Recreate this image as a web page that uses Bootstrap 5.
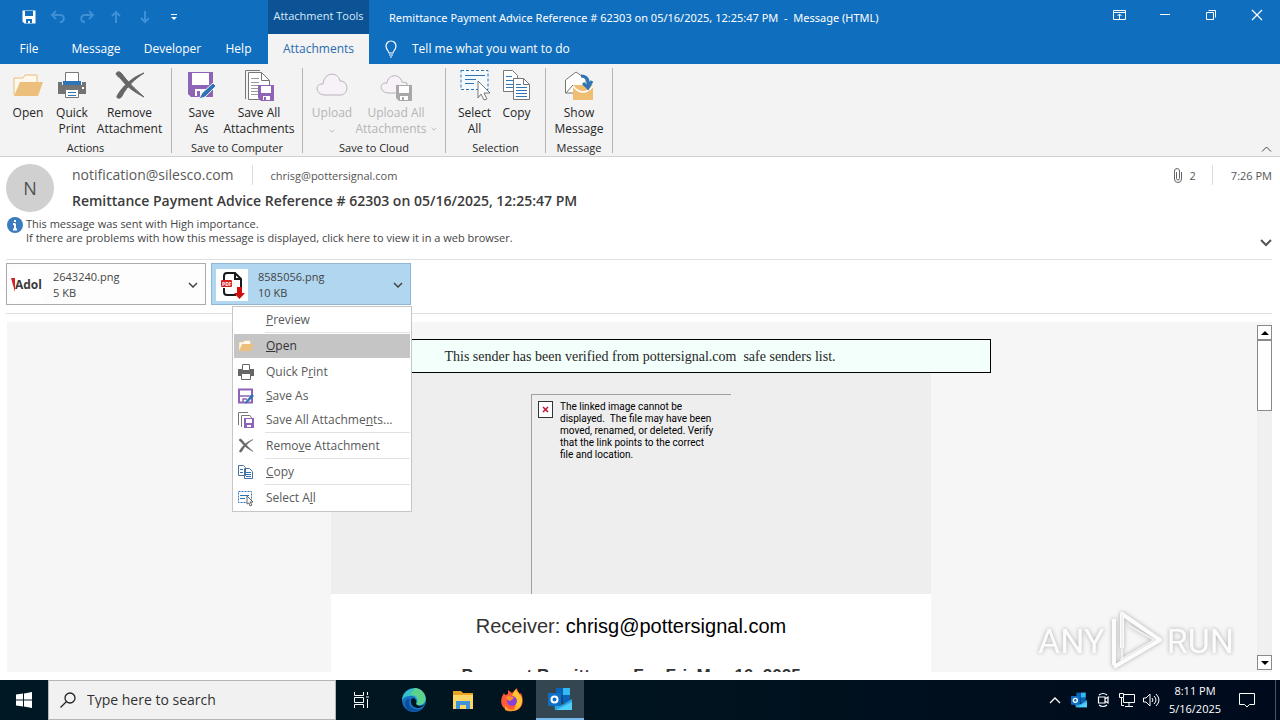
<!DOCTYPE html>
<html lang="en">
<head>
<meta charset="utf-8">
<meta name="viewport" content="width=device-width, initial-scale=1">
<title>Remittance Payment Advice - Message (HTML)</title>
<link href="https://cdn.jsdelivr.net/npm/bootstrap@5.3.0/dist/css/bootstrap.min.css" rel="stylesheet">
<style>
  :root { --blue: #106ebe; --ink: #262626; }
  body { font-family: "Open Sans", "Noto Sans", sans-serif; font-size: 12px; line-height: 16px; color: var(--ink); background: #fff; }
  button { color: inherit; background: none; border: 0; padding: 0; }
  svg { display: block; flex: none; fill: none; overflow: visible; }
  a { color: inherit; text-decoration: none; }
  h1, h2 { margin: 0; }

  /* title bar */
  .title-bar { background: var(--blue); color: #fff; height: 64px; }
  .title-row { height: 34px; }
  .tab-row { height: 30px; }
  .title-left { width: 268px; }
  .title-tools { width: 101px; }
  .tools-caption { background: #0b5394; color: #d7ebfa; font-size: 11px; height: 32px; }
  .tools-box { background: #0b5394; height: 34px; }
  .quick-bar { padding-left: 14px; }
  .quick-btn { width: 29px; height: 20px; }
  .tab-link { height: 30px; }
  .tab-file { width: 58px; } .tab-message { width: 76px; } .tab-developer { width: 77px; } .tab-help { width: 55px; }
  .tab-open { background: #f3f3f3; color: #2a6db0; }
  .caption-btn { width: 46px; height: 30px; }
  .window-title { font: 400 11px/16px "Noto Sans", sans-serif; white-space: pre; padding: 2px 0 0 20px; }
  .tell-me { background: none; border: 0; color: #fff; width: 200px; outline: 0; padding: 0; }
  .tell-me::placeholder { color: #fff; opacity: 1; }

  /* ribbon */
  .ribbon { background: #f3f3f3; border-bottom: 1px solid #d0d0d0; height: 93px; }
  .ribbon-group { border-right: 1px solid #b4b4b4; height: 85px; margin-top: 4px; }
  .ribbon-btn { width: 44px; height: 72px; padding-top: 2px; white-space: nowrap; line-height: 16px; }
  .ribbon-btn svg { margin-bottom: 3px; }
  .ribbon-btn:disabled { color: #b5b5b5; }
  .w-group-1 { width: 172px; } .w-group-2 { width: 131px; } .w-group-3 { width: 143px; } .w-group-4 { width: 100px; } .w-group-5 { width: 67px; }
  .btn-wide { width: 71px; } .btn-wider { width: 84px; } .btn-slim { width: 42px; }
  .group-name { font-size: 11px; line-height: 16px; }

  /* message header */
  .avatar { width: 48px; height: 48px; background: #d0d0d0; color: #505050; font-size: 18px; }
  .msg-head { padding: 7px 8px 0 6px; height: 58px; }
  .msg-lines { padding: 1px 0 0 18px; }
  .from { font-size: 14px; line-height: 20px; color: #5a5a5a; }
  .meta { font-size: 11px; line-height: 16px; padding-top: 2px; color: #555; }
  .subject { font-size: 14px; font-weight: 600; line-height: 20px; color: #3b3b3b; white-space: nowrap; margin-top: 6px; }
  .rule-v { width: 1px; height: 20px; background: #dcdcdc; margin: 0 18px; }
  .info-bar { padding: 2px 8px 0 7px; height: 44px; font-size: 11px; line-height: 14px; color: #444; gap: 3px; }
  .expand-btn { margin-bottom: 12px; }
  .attach-bar { margin: 0 8px 0 6px; padding: 3px 0 8px; border-top: 1px solid #e0e0e0; border-bottom: 1px solid #e0e0e0; gap: 5px; height: 55px; }
  .attach { width: 200px; height: 42px; border: 1px solid #ababab; background: #fdfdfd; font-size: 11px; line-height: 16px; color: #444; padding: 2px 7px 0 4px; gap: 10px; }
  .attach-on { background: #b1d6f0; border-color: #8fb6d2; }
  .thumb { width: 32px; height: 32px; background: #fff; }
  .thumb-word { font: 700 12px/32px "Open Sans", sans-serif; color: #3a3a3a; }

  /* attachment menu */
  .attach-menu { left: 21px; top: 43px; width: 180px; background: #fff; border: 1px solid #c6c6c6; padding: 1px; z-index: 5; }
  .menu-row { height: 24px; padding-left: 4px; color: #5a5a5a; font-size: 12px; width: 100%; text-align: left; gap: 12px; }
  .menu-row svg, .menu-gap { width: 16px; height: 16px; }
  .menu-on { background: #c5c5c5; color: #333; }
  .menu-line { height: 2px; margin-left: 31px; border-top: 1px solid #e1e1e1; }

  /* reading pane */
  .pane { margin: 8px 8px 8px 7px; background: #f6f6f6; overflow: hidden; min-height: 0; }
  .pane-view { padding-right: 2px; }
  .mail { width: 720px; }
  .verified { margin-top: 17px; border: 1px solid #000; background: #f3fffa; height: 34px; font: 14px/34px "Liberation Serif", serif; padding-left: 18px; white-space: pre; }
  .mail-body { width: 600px; background: #fff; }
  .hero { background: #eee; padding: 21px 200px 0; height: 221px; }
  .missing { border: solid #a0a0a0; border-width: 1px 0 0 1px; height: 200px; padding: 6px 0 0 6px; font: 10px/12px Roboto, sans-serif; color: #000; gap: 7px; white-space: nowrap; }
  .missing-mark { width: 15px; height: 17px; border: 1px solid #333; background: #fff; }
  .receiver { font: 20px/24px "Liberation Sans", sans-serif; margin-top: 20px; color: #333; }
  .advice { font: 700 17px/24px "Liberation Sans", sans-serif; margin-top: 26px; color: #333; }
  .scroll { width: 15px; margin: 3px 0 2px; background: #f0f0f0; }
  .scroll-end { height: 15px; border: 1px solid #8a8a8a; background: #fff; }
  .scroll-thumb { height: 71px; border: 1px solid #8a8a8a; background: #fff; }

  .watermark { right: 46px; bottom: 47px; width: 196px; height: 64px; color: #fcfcfc; font: 34px/64px "Liberation Sans Narrow", Roboto, sans-serif; filter: drop-shadow(0 0 2px #aaa); z-index: 6; pointer-events: none; }

  /* taskbar */
  .taskbar { background: linear-gradient(90deg, #001823, #00141f 50%, #000a1d); height: 40px; color: #fff; }
  .start-btn { width: 48px; }
  .task-btn { width: 49px; height: 40px; }
  .task-on { background: #34464f; border-bottom: 2px solid #76b9ed; width: 48px; }
  .search-box { width: 288px; background: #f1f1f1; border: 1px solid #b5b5b5; padding-left: 11px; gap: 11px; }
  .search-box input { border: 0; background: none; outline: 0; font-size: 14px; color: #333; padding: 0; }
  .search-box input::placeholder { color: #333; opacity: 1; }
  .tray-btn { width: 24px; height: 40px; }
  .bell-btn { width: 40px; }
  .clock { width: 64px; font-size: 11px; line-height: 18px; padding-top: 2px; }
  .desk-edge { width: 5px; border-left: 1px solid #4a5566; }
</style>
</head>
<body class="d-flex flex-column vh-100 overflow-hidden">

<svg width="0" height="0" class="position-absolute" aria-hidden="true">
  <symbol id="i-chev" viewBox="0 0 10 6"><path d="M1 1l4 4 4-4" fill="none" stroke="currentColor" stroke-width="1.5"/></symbol>
  <symbol id="i-folder" viewBox="0 0 32 32"><path d="M2 25V8h9l2-3h12v7" fill="#fff8ee" stroke="#e9bd7c"/><path d="M2 26L8 12h23l-5 14z" fill="#ecc07c"/></symbol>
  <symbol id="i-print" viewBox="0 0 32 32"><path d="M2 12h4v3h20v-3h4v12H2z" fill="#737373"/><path d="M9.500 13V2.500h13V13" fill="#fff" stroke="#777"/><path d="M7 11h18v4H7z" fill="#2e75b6"/><path d="M9.500 19.500h13v8h-13z" fill="#fff" stroke="#777"/><path d="M12 22.500h8M12 25.500h8" stroke="#2e75b6"/><path d="M26 17h2v2h-2z" fill="#fff"/></symbol>
  <symbol id="i-x" viewBox="0 0 32 32"><path d="M2 4c1-3 4-3 6 0 6 8 12 14 22 23-10-5-18-11-23-18C5 7 3 6 2 4z" fill="#666" stroke="#666"/><path d="M30 3C21 9 13 16 8 26c-1 3-6 3-5 0C8 17 18 7 30 3z" fill="#666" stroke="#666"/></symbol>
  <symbol id="i-saveas" viewBox="0 0 32 32"><path d="M2 2h25v25H5l-3-3z" fill="#8f63b5"/><path d="M6 3h17v12H6zM9 19h12v7H9z" fill="#fff"/><path d="M11 21h3v5h-3z" fill="#8f63b5"/><path d="M27 13l3 3-11 11-6 2 3-6z" fill="#2e75b6" stroke="#f3f3f3"/></symbol>
  <symbol id="i-saveall" viewBox="0 0 32 32"><path d="M2.500 29V.500H17" stroke="#777"/><path d="M5.500 29.500V2.500h13l8 8v19z" fill="#fff" stroke="#777"/><path d="M18.500 2.500v8h8" stroke="#777"/><path d="M8 8.500h8M8 12.500h8M8 15.500h9M8 18.500h8M8 21.500h7M8 24.500h7" stroke="#999"/><path d="M15 15h16v16H18l-3-3z" fill="#8f63b5"/><path d="M18 16h10v7H18zM20 26h7v4h-7z" fill="#fff"/><path d="M21 27h2v3h-2z" fill="#8f63b5"/></symbol>
  <symbol id="i-cloud" viewBox="0 0 32 32"><path d="M8 25c-9-1-9-12-1-11C8 2 22 1 24 11c9 0 9 13 1 14z" fill="#f6f2f7" stroke="#b9b3bb"/></symbol>
  <symbol id="i-cloudsave" viewBox="0 0 32 32"><path d="M8 23c-9-1-9-11-1-10C8 4 20 3 22 12l5 1v10z" fill="#f6f2f7" stroke="#b9b3bb"/><path d="M16 15h16v16H19l-3-3z" fill="#a8a8a8"/><path d="M19 16h10v7H19zM20 26h8v4h-8z" fill="#fff"/><path d="M22 27h2v3h-2z" fill="#a8a8a8"/></symbol>
  <symbol id="i-select" viewBox="0 0 32 32"><path d="M2 .500h27v19H2z" fill="#f5fafe" stroke="#2e75b6" stroke-dasharray="3 2"/><path d="M6 5.500h20M6 9.500h11M6 13.500h9" stroke="#2e75b6"/><path d="M19 11l12 12h-6l3 6-3 1-3-6-3 4z" fill="#fff" stroke="#777"/></symbol>
  <symbol id="i-copy" viewBox="0 0 32 32"><path d="M2.500.500h9l5 5v16h-14z" fill="#fff" stroke="#777"/><path d="M5 6.500h6M5 10.500h8M5 14.500h8M5 17.500h8" stroke="#2e75b6"/><path d="M12.500 8.500h10l6 6v15h-16z" fill="#fff" stroke="#777"/><path d="M22.500 8.500v6h6" stroke="#777"/><path d="M15 14.500h5M15 17.500h11M15 20.500h11M15 23.500h11M15 26.500h11" stroke="#2e75b6"/></symbol>
  <symbol id="i-show" viewBox="0 0 32 32"><path d="M2.500 23V10L13 2l10 7v14z" fill="#fff" stroke="#777"/><path d="M3 23l7-8" stroke="#777"/><path d="M10 15h20v15H10z" fill="#efbe72"/><path d="M10 16c6 8 14 8 20 0" stroke="#fff" stroke-width="1.500"/><path d="M18 6c6 0 8 4 7 11M20 13l5 5 4-7" stroke="#2e75b6" stroke-width="3"/></symbol>
  <symbol id="i-outlook" viewBox="0 0 24 24"><path d="M8 1h14v15H8z" fill="#0a63b5"/><path d="M15 1h7v7h-7z" fill="#35b8f1"/><path d="M8 8h7v8H8z" fill="#0f4a8c"/><path d="M6 13l8 5 10-6v11H7z" fill="#2aa5e8"/><path d="M8 23l16-8v8z" fill="#4fd0f8"/><rect y="6" width="13" height="13" rx="1" fill="#0f6fc6"/><circle cx="6.500" cy="12.500" r="3" fill="none" stroke="#fff" stroke-width="2"/></symbol>
</svg>

<header class="title-bar d-flex flex-shrink-0">
  <div class="title-left">
    <div class="title-row quick-bar d-flex align-items-center">
      <button class="quick-btn d-flex justify-content-center align-items-center" aria-label="Save"><svg width="14" height="14"><path d="M.500.500h13v13h-11l-2-2z" fill="#fff"/><path d="M3 1h8v5H3zM4 9h6v4H8v-2H6v2H4z" fill="#106ebe"/></svg></button>
      <button class="quick-btn d-flex justify-content-center align-items-center" aria-label="Undo"><svg width="14" height="14"><path d="M5 1L1 5l4 4M1 5h8c5 0 5 7 0 7" stroke="#3d8fd6" stroke-width="2"/></svg></button>
      <button class="quick-btn d-flex justify-content-center align-items-center" aria-label="Redo"><svg width="14" height="14"><path d="M9 1l4 4-4 4M13 5H5c-5 0-5 7 0 7" stroke="#3d8fd6" stroke-width="2"/></svg></button>
      <button class="quick-btn d-flex justify-content-center align-items-center" aria-label="Previous"><svg width="10" height="12"><path d="M5 12V1M1 5l4-4 4 4" stroke="#3d8fd6" stroke-width="2"/></svg></button>
      <button class="quick-btn d-flex justify-content-center align-items-center" aria-label="Next"><svg width="10" height="12"><path d="M5 0v11M1 7l4 4 4-4" stroke="#3d8fd6" stroke-width="2"/></svg></button>
      <button class="quick-btn d-flex justify-content-center align-items-center" aria-label="Customize"><svg width="6" height="6"><path d="M0 .500h6" stroke="#fff"/><path d="M0 3h6l-3 3z" fill="#fff"/></svg></button>
    </div>
    <nav class="tab-row d-flex">
      <a href="#" class="tab-link tab-file d-flex align-items-center justify-content-center">File</a>
      <a href="#" class="tab-link tab-message d-flex align-items-center justify-content-center">Message</a>
      <a href="#" class="tab-link tab-developer d-flex align-items-center justify-content-center">Developer</a>
      <a href="#" class="tab-link tab-help d-flex align-items-center justify-content-center">Help</a>
    </nav>
  </div>
  <div class="title-tools">
    <div class="tools-box"><div class="tools-caption d-flex align-items-center justify-content-center">Attachment Tools</div></div>
    <a href="#" class="tab-link tab-open d-flex align-items-center justify-content-center">Attachments</a>
  </div>
  <div class="flex-fill">
    <div class="title-row d-flex align-items-center"><h1 class="window-title">Remittance Payment Advice Reference # 62303 on 05/16/2025, 12:25:47 PM  -  Message (HTML)</h1></div>
    <label class="tab-row d-flex align-items-center ms-3 gap-3"><svg width="11" height="17"><path d="M4 12c0-2-3-3-3-7a5 5 0 0110 0c0 4-3 5-3 7zM4 14h4M5 16h2" stroke="#fff" stroke-width="1.200"/></svg><input class="tell-me" type="text" placeholder="Tell me what you want to do"></label>
  </div>
  <div class="d-flex">
    <button class="caption-btn d-flex justify-content-center align-items-center" aria-label="Ribbon display options"><svg width="13" height="10"><path d="M.500.500h12v9H.500zM.500 2.500h12M6.500 9V4M4.500 6l2-2 2 2" stroke="#fff"/></svg></button>
    <button class="caption-btn d-flex justify-content-center align-items-center" aria-label="Minimize"><svg width="10" height="10"><path d="M0 4.500h10" stroke="#fff"/></svg></button>
    <button class="caption-btn d-flex justify-content-center align-items-center" aria-label="Restore"><svg width="10" height="10"><path d="M.500 2.500h7v7h-7zM2.500.500h7v7" stroke="#fff"/></svg></button>
    <button class="caption-btn d-flex justify-content-center align-items-center" aria-label="Close"><svg width="10" height="10"><path d="M0 0l10 10M10 0L0 10" stroke="#fff" stroke-width="1.200"/></svg></button>
  </div>
</header>

<section class="ribbon d-flex flex-shrink-0" aria-label="Ribbon">
  <div class="ribbon-group w-group-1">
    <div class="d-flex justify-content-center">
      <button class="ribbon-btn d-flex flex-column align-items-center"><svg width="32" height="32"><use href="#i-folder"/></svg>Open</button>
      <button class="ribbon-btn d-flex flex-column align-items-center"><svg width="32" height="32"><use href="#i-print"/></svg>Quick<span>Print</span></button>
      <button class="ribbon-btn btn-wide d-flex flex-column align-items-center"><svg width="32" height="32"><use href="#i-x"/></svg>Remove<span>Attachment</span></button>
    </div>
    <div class="group-name text-center">Actions</div>
  </div>
  <div class="ribbon-group w-group-2">
    <div class="d-flex justify-content-center">
      <button class="ribbon-btn d-flex flex-column align-items-center"><svg width="32" height="32"><use href="#i-saveas"/></svg>Save<span>As</span></button>
      <button class="ribbon-btn btn-wide d-flex flex-column align-items-center"><svg width="32" height="32"><use href="#i-saveall"/></svg>Save All<span>Attachments</span></button>
    </div>
    <div class="group-name text-center">Save to Computer</div>
  </div>
  <div class="ribbon-group w-group-3">
    <div class="d-flex justify-content-center">
      <button disabled class="ribbon-btn d-flex flex-column align-items-center"><svg width="32" height="32"><use href="#i-cloud"/></svg>Upload<svg width="6" height="4" class="mt-2"><use href="#i-chev"/></svg></button>
      <button disabled class="ribbon-btn btn-wider d-flex flex-column align-items-center"><svg width="32" height="32"><use href="#i-cloudsave"/></svg>Upload All<span class="d-flex align-items-center gap-1">Attachments <svg width="6" height="4" class="mb-0"><use href="#i-chev"/></svg></span></button>
    </div>
    <div class="group-name text-center">Save to Cloud</div>
  </div>
  <div class="ribbon-group w-group-4">
    <div class="d-flex justify-content-center">
      <button class="ribbon-btn btn-slim d-flex flex-column align-items-center"><svg width="32" height="32"><use href="#i-select"/></svg>Select<span>All</span></button>
      <button class="ribbon-btn btn-slim d-flex flex-column align-items-center"><svg width="32" height="32"><use href="#i-copy"/></svg>Copy</button>
    </div>
    <div class="group-name text-center">Selection</div>
  </div>
  <div class="ribbon-group w-group-5">
    <div class="d-flex justify-content-center">
      <button class="ribbon-btn d-flex flex-column align-items-center"><svg width="32" height="32"><use href="#i-show"/></svg>Show<span>Message</span></button>
    </div>
    <div class="group-name text-center">Message</div>
  </div>
  <button class="ms-auto align-self-end p-2 pb-1" aria-label="Collapse the ribbon"><svg width="11" height="6"><path d="M1 5.500l4.500-4.500L10 5.500" stroke="#444"/></svg></button>
</section>

<section class="msg-head d-flex flex-shrink-0">
  <div class="avatar rounded-circle d-flex align-items-center justify-content-center flex-shrink-0">N</div>
  <div class="msg-lines flex-fill">
    <div class="d-flex align-items-center">
      <span class="from">notification@silesco.com</span>
      <span class="rule-v"></span>
      <span class="meta">chrisg@pottersignal.com</span>
      <svg class="ms-auto me-2" width="8" height="15"><path d="M2.500 4v6.500a1.500 1.500 0 003 0V3a2.500 2.500 0 00-5 0v8a3 3 0 007 0V4" stroke="#666"/></svg>
      <span class="meta">2</span>
      <span class="rule-v ms-3"></span>
      <time class="meta">7:26 PM</time>
    </div>
    <h2 class="subject">Remittance Payment Advice Reference # 62303 on 05/16/2025, 12:25:47 PM</h2>
  </div>
</section>

<section class="info-bar d-flex flex-shrink-0">
  <svg width="16" height="16"><circle cx="8" cy="8" r="8" fill="#3b7bbf"/><path d="M8 3v2M8 6.500V13M6 7h2M6 12.500h4" stroke="#fff" stroke-width="2"/></svg>
  <div class="flex-fill">This message was sent with High importance.<br><a href="#">If there are problems with how this message is displayed, click here to view it in a web browser.</a></div>
  <button class="expand-btn align-self-end" aria-label="Expand header"><svg width="12" height="8"><path d="M1 1l5 5 5-5" stroke="#555" stroke-width="2"/></svg></button>
</section>

<section class="attach-bar d-flex flex-shrink-0">
  <button class="attach d-flex align-items-center text-start">
    <span class="thumb d-flex align-items-center"><svg width="4" height="14"><path d="M0 0h4v14z" fill="#d0202c"/></svg><span class="thumb-word">Adol</span></span>
    <span class="flex-fill">2643240.png<br>5 KB</span>
    <svg width="10" height="6"><use href="#i-chev"/></svg>
  </button>
  <div class="position-relative">
    <button class="attach attach-on d-flex align-items-center text-start">
      <span class="thumb"><svg width="32" height="32"><path d="M8 11V7q0-3 3-3h8l6 6v8M19 4v6h6M8 19v4q0 3 3 3h9" stroke="#1a1a1a" stroke-width="2"/><rect x="5" y="11" width="11" height="7" rx="1" fill="#d81e1e"/><text x="6" y="17" font-size="5" font-weight="700" fill="#fff">PDF</text><path d="M21 18h5v6h3l-5.500 6-5.500-6h3z" fill="#d40c0c"/></svg></span>
      <span class="flex-fill">8585056.png<br>10 KB</span>
      <svg width="10" height="6"><use href="#i-chev"/></svg>
    </button>
    <div class="attach-menu position-absolute" role="menu">
      <button class="menu-row d-flex align-items-center"><span class="menu-gap"></span><span><u>P</u>review</span></button>
      <div class="menu-line"></div>
      <button class="menu-row menu-on d-flex align-items-center"><svg><use href="#i-folder"/></svg><span><u>O</u>pen</span></button>
      <div class="menu-line border-0"></div>
      <button class="menu-row d-flex align-items-center"><svg viewBox="0 0 16 16"><path d="M0 5h16v7H0z" fill="#666"/><path d="M4.500 6.500v-6h7v6zM3.500 9.500h9v6h-9z" fill="#fff" stroke="#666"/></svg><span>Quick P<u>r</u>int</span></button>
      <button class="menu-row d-flex align-items-center"><svg viewBox="0 0 16 16"><path d="M1 1.500h13v13H1z" fill="#fff" stroke="#8f63b5" stroke-width="2"/><path d="M2 8h11M5 15v-4h4" stroke="#8f63b5" stroke-width="1.500"/><path d="M14 6l2 2-7 7-2 1 1-3z" fill="#2e75b6"/></svg><span><u>S</u>ave As</span></button>
      <button class="menu-row d-flex align-items-center"><svg viewBox="0 0 16 16"><path d="M.500 13V.500H10M3.500 15V3.500H12l2 3" stroke="#777"/><path d="M6 6h10v10H6z" fill="#8f63b5"/><path d="M8 7h6v4H8zM9 13h4v2H9z" fill="#fff"/></svg><span>Save All Attachme<u>n</u>ts...</span></button>
      <div class="menu-line"></div>
      <button class="menu-row d-flex align-items-center"><svg><use href="#i-x"/></svg><span>Remo<u>v</u>e Attachment</span></button>
      <div class="menu-line"></div>
      <button class="menu-row d-flex align-items-center"><svg viewBox="0 0 16 16"><path d="M.500 1.500h5l2 2v8h-7zM6.500 4.500h5l3 3v7h-8z" fill="#fff" stroke="#4c6f9c"/><path d="M2 5.500h3M2 8.500h3M8 8.500h5M8 10.500h5M8 12.500h5" stroke="#2e75b6"/></svg><span><u>C</u>opy</span></button>
      <div class="menu-line"></div>
      <button class="menu-row d-flex align-items-center"><svg viewBox="0 0 16 16"><path d="M.500 1.500h13v11H.500z" stroke="#2e75b6" stroke-dasharray="2 1"/><path d="M2 5.500h9M2 8.500h5" stroke="#2e75b6"/><path d="M9 6l6 6h-3l2 3-2 1-1-3-2 1z" fill="#fff" stroke="#666"/></svg><span>Select A<u>l</u>l</span></button>
    </div>
  </div>
</section>

<main class="pane d-flex flex-fill">
  <div class="pane-view flex-fill d-flex flex-column align-items-center overflow-hidden">
    <article class="mail d-flex flex-column align-items-center">
      <div class="verified align-self-stretch text-center">This sender has been verified from pottersignal.com  safe senders list.</div>
      <div class="mail-body text-center">
        <div class="hero">
          <div class="missing d-flex align-items-start text-start"><span class="missing-mark d-flex align-items-center justify-content-center"><svg width="7" height="7"><path d="M1 1l5 5M6 1L1 6" stroke="#c8102e" stroke-width="1.500"/></svg></span><span>The linked image cannot be<br>displayed.&nbsp; The file may have been<br>moved, renamed, or deleted. Verify<br>that the link points to the correct<br>file and location.</span></div>
        </div>
        <p class="receiver mb-0">Receiver: <a href="#" class="text-black">chrisg@pottersignal.com</a></p>
        <p class="advice mb-0">Payment Remittance For Fri, May 16, 2025</p>
      </div>
    </article>
  </div>
  <div class="scroll d-flex flex-column">
    <button class="scroll-end d-flex align-items-center justify-content-center" aria-label="Scroll up"><svg width="8" height="4"><path d="M0 4l4-4 4 4z" fill="#000"/></svg></button>
    <div class="scroll-thumb"></div>
    <button class="scroll-end mt-auto d-flex align-items-center justify-content-center" aria-label="Scroll down"><svg width="8" height="4"><path d="M0 0l4 4 4-4z" fill="#000"/></svg></button>
  </div>
</main>

<div class="watermark position-absolute d-flex justify-content-between align-items-center"><span>ANY</span><svg width="56" height="64"><path d="M6 56V10M6 58l46-27L14 5v34" stroke="#fcfcfc" stroke-width="4" stroke-linejoin="round"/><path d="M14 5v46M20 16l26 15-34 20" stroke="#f0f0f0" stroke-width="2"/></svg><span>RUN</span></div>

<footer class="taskbar d-flex flex-shrink-0">
  <button class="start-btn d-flex align-items-center justify-content-center" aria-label="Start"><svg width="16" height="16"><path d="M0 2.500l7-1v6H0zM8 1.400L16 0v7.500H8zM0 8.500h7v6l-7-1zM8 8.500h8V16l-8-1.400z" fill="#fff"/></svg></button>
  <label class="search-box d-flex align-items-center"><svg width="16" height="16"><circle cx="10" cy="6" r="5" stroke="#222" stroke-width="1.300"/><path d="M6.500 9.500L.500 15.500" stroke="#222" stroke-width="1.300"/></svg><input type="text" placeholder="Type here to search"></label>
  <button class="task-btn d-flex align-items-center justify-content-center" aria-label="Task view"><svg width="16" height="16"><path d="M1.500 0v3.500h9V0M1.500 16v-3.500h9V16M1.500 5.500h9v5h-9zM14.500 0v3M14.500 7v9M13 5h3" stroke="#fff"/></svg></button>
  <button class="task-btn ms-1 d-flex align-items-center justify-content-center me-n1" aria-label="Edge"><svg width="24" height="24" viewBox="0 0 24 24"><circle cx="12" cy="12" r="12" fill="#1672c4"/><path d="M0 12C1-1 19-4 23 8c3 9-6 11-9 8 3-4-1-9-6-8-4 0-7 2-8 4z" fill="#35c1c8"/><path d="M12 0c9 0 13 8 11 13-2 4-7 5-9 3 5-5-1-10-6-9C11 3 13 1 12 0z" fill="#5dd28a"/><path d="M8 11c-3 6 2 12 11 10-4 4-14 4-16-4-1-4 2-7 5-6z" fill="#0d4f9e"/><path d="M9 12c1-4 7-1 5 4 2 3 7 2 9 0-5 7-15 4-14-4z" fill="#00141f"/></svg></button>
  <button class="task-btn d-flex align-items-center justify-content-center" aria-label="File Explorer"><svg width="20" height="20" viewBox="1 0 20 20"><path d="M1 1h8l2 2h10v16H1z" fill="#e8a320"/><path d="M1 5h20v14H1z" fill="#ffd667"/><path d="M4 19v-8h14v8h-4v-4H8v4z" fill="#3c95d8"/></svg></button>
  <button class="task-btn d-flex align-items-center justify-content-center" aria-label="Firefox"><svg width="22" height="24"><path d="M3 5l1 2 3-1V2l4 3 5-5c0 3 2 4 3 6l1-1c4 9 1 18-9 18C1 23-3 14 3 5z" fill="#ff5a36"/><path d="M15 1c1 4 7 6 6 13-1 5-4 8-9 9 5-6 2-11 0-13-2-3 1-6 3-9z" fill="#ffc52e"/><path d="M4 16c3 8 13 7 14-1-1 8-8 10-14 7z" fill="#ff9b24"/><circle cx="11" cy="13" r="5" fill="#8b3fd8"/><path d="M5 9c3-2 5 0 8 0-1 3-3 2-3 4-3 0-5-2-5-4z" fill="#ff8a28"/></svg></button>
  <button class="task-btn task-on d-flex align-items-center justify-content-center" aria-label="Outlook"><svg width="24" height="24"><use href="#i-outlook"/></svg></button>
  <div class="ms-auto d-flex">
    <button class="tray-btn d-flex align-items-center justify-content-center" aria-label="Show hidden icons"><svg width="12" height="7"><path d="M1 6l5-5 5 5" stroke="#fff" stroke-width="1.300"/></svg></button>
    <button class="tray-btn d-flex align-items-center justify-content-center" aria-label="Outlook notifications"><svg width="16" height="16"><use href="#i-outlook"/></svg></button>
    <button class="tray-btn d-flex align-items-center justify-content-center" aria-label="Meet now"><svg width="12" height="16"><path d="M1.500 5h6.500v6H1.500zM8 7l3-2v6L8 9M2 3q4-3 8 0M2 13q4 3 8 0" stroke="#fff" stroke-width="1.200"/></svg></button>
    <button class="tray-btn d-flex align-items-center justify-content-center" aria-label="Network"><svg width="16" height="14"><path d="M5 1.500h10.500v8H4.500V5M.500.500h4v4h-4zM2.500 4v8.500H5M10 10v3M6 13.500h8" stroke="#fff"/></svg></button>
    <button class="tray-btn d-flex align-items-center justify-content-center" aria-label="Volume"><svg width="16" height="14"><path d="M.500 5h2.500l4-4v12L3 9H.500zM9 5q2 2 0 4M11 3q4 4 0 8M13 1q6 6 0 12" stroke="#fff"/></svg></button>
    <time class="clock text-center">8:11 PM<br>5/16/2025</time>
    <button class="bell-btn d-flex align-items-center justify-content-center" aria-label="Notifications"><svg width="16" height="16"><path d="M.500 1.500h15v11h-5L8 15l-2.500-2.500h-5z" stroke="#fff"/></svg></button>
    <div class="ms-2 desk-edge"></div>
  </div>
</footer>
<script src="https://cdn.jsdelivr.net/npm/bootstrap@5.3.0/dist/js/bootstrap.bundle.min.js"></script>
</body>
</html>
